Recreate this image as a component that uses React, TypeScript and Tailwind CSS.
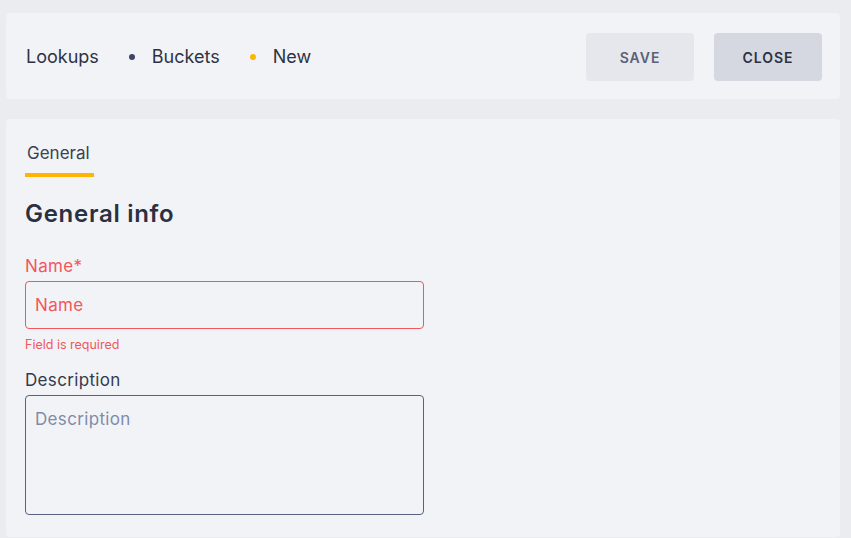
export default function App() {
  const font = { fontFamily: "Inter, 'Open Sans', sans-serif" };
  return (
    <div style={font} className="min-h-screen w-full bg-[#ebecf0] pl-[6px] pr-[11px] pt-[13px] pb-[2px]">
      <div className="h-[86px] rounded-[4px] bg-[#f2f3f7] pl-[20px] pr-[18px] flex items-center justify-between">
        <div className="flex items-center text-[18px] text-[#2d3244] pt-[1px]">
          <span>Lookups</span>
          <span className="ml-[30px] mr-[17px] w-[6px] h-[6px] rounded-full bg-[#3f4466]"></span>
          <span>Buckets</span>
          <span className="ml-[30px] mr-[17px] w-[6px] h-[6px] rounded-full bg-[#ffb400]"></span>
          <span>New</span>
        </div>
        <div className="flex items-center gap-[20px] pt-[2px]">
          <button className="w-[108px] h-[48px] rounded-[4px] bg-[#e6e7ec] text-[14px] font-semibold tracking-[0.07em] text-[#5b6076]">SAVE</button>
          <button className="w-[108px] h-[48px] rounded-[4px] bg-[#d5d8e1] text-[14px] font-semibold tracking-[0.07em] text-[#2c3144]">CLOSE</button>
        </div>
      </div>

      <div className="mt-[20px] h-[418px] rounded-[4px] bg-[#f2f3f7] pl-[19px] pt-[22px]">
        <div className="inline-flex flex-col w-[69px]">
          <span className="px-[2px] text-[17px] leading-[20px] text-[#3b4152]">General</span>
          <span className="mt-[10px] h-[4px] bg-[#ffb400]"></span>
        </div>
        <h2 className="mt-[23px] text-[24px] leading-[28px] font-semibold tracking-[0.03em] text-[#2b3040]">General info</h2>

        <div className="w-[399px]">
          <label className="mt-[28px] block text-[17px] leading-[20px] tracking-[0.02em] text-[#f0585c]">Name*</label>
          <input
            placeholder="Name"
            className="mt-[5px] block w-full h-[48px] rounded-[4px] border border-[#f0585c] bg-transparent px-[9px] text-[17px] tracking-[0.02em] outline-none placeholder:text-[#f0585c]"
          />
          <p className="mt-[8px] text-[12.5px] leading-[16px] text-[#f0585c]">Field is required</p>

          <label className="mt-[17px] block text-[17px] leading-[20px] tracking-[0.02em] text-[#333a4a]">Description</label>
          <textarea
            placeholder="Description"
            className="mt-[5px] block w-full h-[120px] resize-none rounded-[4px] border border-[#5a6282] bg-transparent px-[9px] pt-[13px] pb-[11px] text-[17px] leading-[20px] tracking-[0.02em] outline-none placeholder:text-[#7f8ca8]"
          />
        </div>
      </div>
    </div>
  );
}
